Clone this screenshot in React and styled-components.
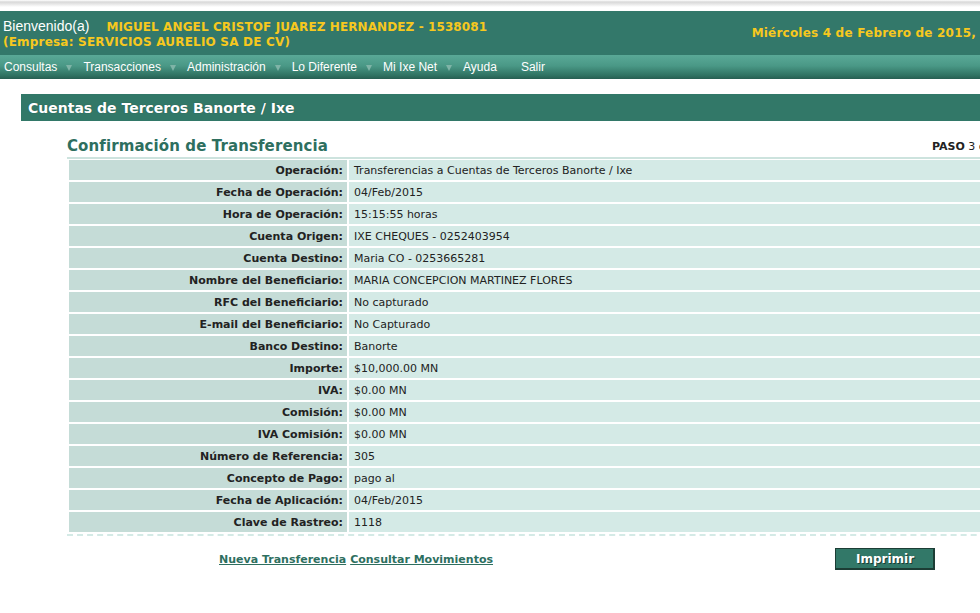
import React from 'react';
import styled, { createGlobalStyle } from 'styled-components';

const GlobalStyle = createGlobalStyle`
    html, body {
        margin: 0;
        padding: 0;
        background: white;
        overflow: hidden;
    }
    body {
        font-family: "DejaVu Sans", Verdana, sans-serif;
    }
`

const Page = styled.div`
    width: 1060px;
`

const TopStrip = styled.div`
    height: 11px;
    background: linear-gradient(to bottom, #ffffff 0px, #d8d8d8 2px, #e6e6e6 4px, #ffffff 7px);
`

const Header = styled.header`
    background: #33786a;
    height: 44px;
    display: flex;
    justify-content: space-between;
    align-items: center;
    padding: 0 3px;
`

const Welcome = styled.div`
    display: flex;
    flex-direction: column;
    gap: 1px;
`

const WelcomeLine = styled.div`
    display: flex;
    align-items: baseline;
    gap: 17px;
`

const Hello = styled.span`
    color: white;
    font-family: "Liberation Sans", Arial, sans-serif;
    font-size: 14px;
`

const Yellow = styled.span`
    color: #f7c81e;
    font-weight: bold;
    font-size: 12px;
    letter-spacing: ${p => p.$tight ? '0.1px' : '0.2px'};
`

const DateText = styled(Yellow)`
    margin-right: 2px;
`

const Nav = styled.nav`
    height: 24px;
    background: linear-gradient(to bottom, #5aa997 0%, #4a9886 45%, #2f7262 85%, #265e51 100%);
    display: flex;
    align-items: center;
    padding-left: 4px;
`

const NavItem = styled.span`
    color: white;
    font-family: "Liberation Sans", Arial, sans-serif;
    font-size: 12px;
    margin-right: ${p => p.$last ? '0' : '11px'};
    display: inline-flex;
    align-items: center;
`

const Arrow = styled.span`
    width: 0;
    height: 0;
    margin-left: 9px;
    margin-top: 2px;
    border-left: 3.5px solid transparent;
    border-right: 3.5px solid transparent;
    border-top: 6px solid #7fb4a7;
`

const Exit = styled(NavItem)`
    margin-left: 13px;
`

const SectionBar = styled.div`
    margin: 15px 0 0 21px;
    height: 27px;
    background: #327868;
    display: flex;
    align-items: center;
    padding-left: 7px;
    color: white;
    font-weight: bold;
    font-size: 14px;
    text-shadow: 0 0 1px rgba(0, 0, 0, 0.4);
`

const Content = styled.div`
    margin-left: 67px;
    width: 990px;
`

const TitleRow = styled.div`
    display: flex;
    justify-content: space-between;
    align-items: flex-end;
    margin-top: 16px;
    padding-bottom: 1px;
    border-bottom: 2px solid #cde3de;
`

const Title = styled.h1`
    margin: 0;
    color: #2e6f5f;
    font-size: 15px;
    font-weight: bold;
    line-height: 19px;
    letter-spacing: 0.1px;
`

const Step = styled.span`
    font-size: 11px;
    color: #222;
    margin-right: 54px;
    margin-bottom: 3px;
    b { font-weight: bold; }
`

const DataTable = styled.table`
    border-collapse: separate;
    border-spacing: 2px;
    width: 100%;
    margin-top: -1px;
    font-size: 11px;
    color: #222;
`

const Label = styled.td`
    width: 270px;
    background: #c5dcd7;
    text-align: right;
    font-weight: bold;
    height: 20px;
    padding: 0 4px 0 4px;
`

const Value = styled.td`
    background: #d4eae6;
    height: 20px;
    padding: 0 4px 0 5px;
`

const Dashed = styled.div`
    border-top: 2px dashed #d4eae6;
`

const Footer = styled.div`
    display: flex;
    align-items: center;
    margin-top: 12px;
`

const Links = styled.div`
    margin-left: 152px;
    display: flex;
    gap: 4px;
    width: 616px;
`

const ActionLink = styled.a`
    color: #2e6f5f;
    font-weight: bold;
    font-size: 11px;
    text-decoration: underline;
    cursor: pointer;
`

const PrintButton = styled.button`
    width: 100px;
    height: 22px;
    background: #327868;
    color: white;
    font-family: "DejaVu Sans", Verdana, sans-serif;
    font-weight: bold;
    font-size: 12px;
    border: 1px solid #1c3d35;
    box-shadow: inset -1px -1px 0 #1c3d35;
    text-shadow: 1px 1px 0 #1c3d35;
    padding: 0;
    cursor: pointer;
`

const rows = [
    ['Operación:', 'Transferencias a Cuentas de Terceros Banorte / Ixe'],
    ['Fecha de Operación:', '04/Feb/2015'],
    ['Hora de Operación:', '15:15:55 horas'],
    ['Cuenta Origen:', 'IXE CHEQUES - 0252403954'],
    ['Cuenta Destino:', 'Maria CO - 0253665281'],
    ['Nombre del Beneficiario:', 'MARIA CONCEPCION MARTINEZ FLORES'],
    ['RFC del Beneficiario:', 'No capturado'],
    ['E-mail del Beneficiario:', 'No Capturado'],
    ['Banco Destino:', 'Banorte'],
    ['Importe:', '$10,000.00 MN'],
    ['IVA:', '$0.00 MN'],
    ['Comisión:', '$0.00 MN'],
    ['IVA Comisión:', '$0.00 MN'],
    ['Número de Referencia:', '305'],
    ['Concepto de Pago:', 'pago al'],
    ['Fecha de Aplicación:', '04/Feb/2015'],
    ['Clave de Rastreo:', '1118'],
];

const menu = ['Consultas', 'Transacciones', 'Administración', 'Lo Diferente', 'Mi Ixe Net', 'Ayuda'];

export default function App() {
    return (
        <Page>
            <GlobalStyle />
            <TopStrip />
            <Header>
                <Welcome>
                    <WelcomeLine>
                        <Hello>Bienvenido(a)</Hello>
                        <Yellow $tight>MIGUEL ANGEL CRISTOF JUAREZ HERNANDEZ - 1538081</Yellow>
                    </WelcomeLine>
                    <Yellow>(Empresa: SERVICIOS AURELIO SA DE CV)</Yellow>
                </Welcome>
                <DateText>Miércoles 4 de Febrero de 2015, 03:15 p.m.</DateText>
            </Header>
            <Nav>
                {menu.map((m, i) => (
                    <NavItem key={m}>
                        {m}
                        {i < menu.length - 1 && <Arrow />}
                    </NavItem>
                ))}
                <Exit $last>Salir</Exit>
            </Nav>
            <SectionBar>Cuentas de Terceros Banorte / Ixe</SectionBar>
            <Content>
                <TitleRow>
                    <Title>Confirmación de Transferencia</Title>
                    <Step><b>PASO</b> 3 de 3</Step>
                </TitleRow>
                <DataTable>
                    <tbody>
                        {rows.map(([l, v]) => (
                            <tr key={l}>
                                <Label>{l}</Label>
                                <Value>{v}</Value>
                            </tr>
                        ))}
                    </tbody>
                </DataTable>
                <Dashed />
                <Footer>
                    <Links>
                        <ActionLink>Nueva Transferencia</ActionLink>
                        <ActionLink>Consultar Movimientos</ActionLink>
                    </Links>
                    <PrintButton>Imprimir</PrintButton>
                </Footer>
            </Content>
        </Page>
    );
}
